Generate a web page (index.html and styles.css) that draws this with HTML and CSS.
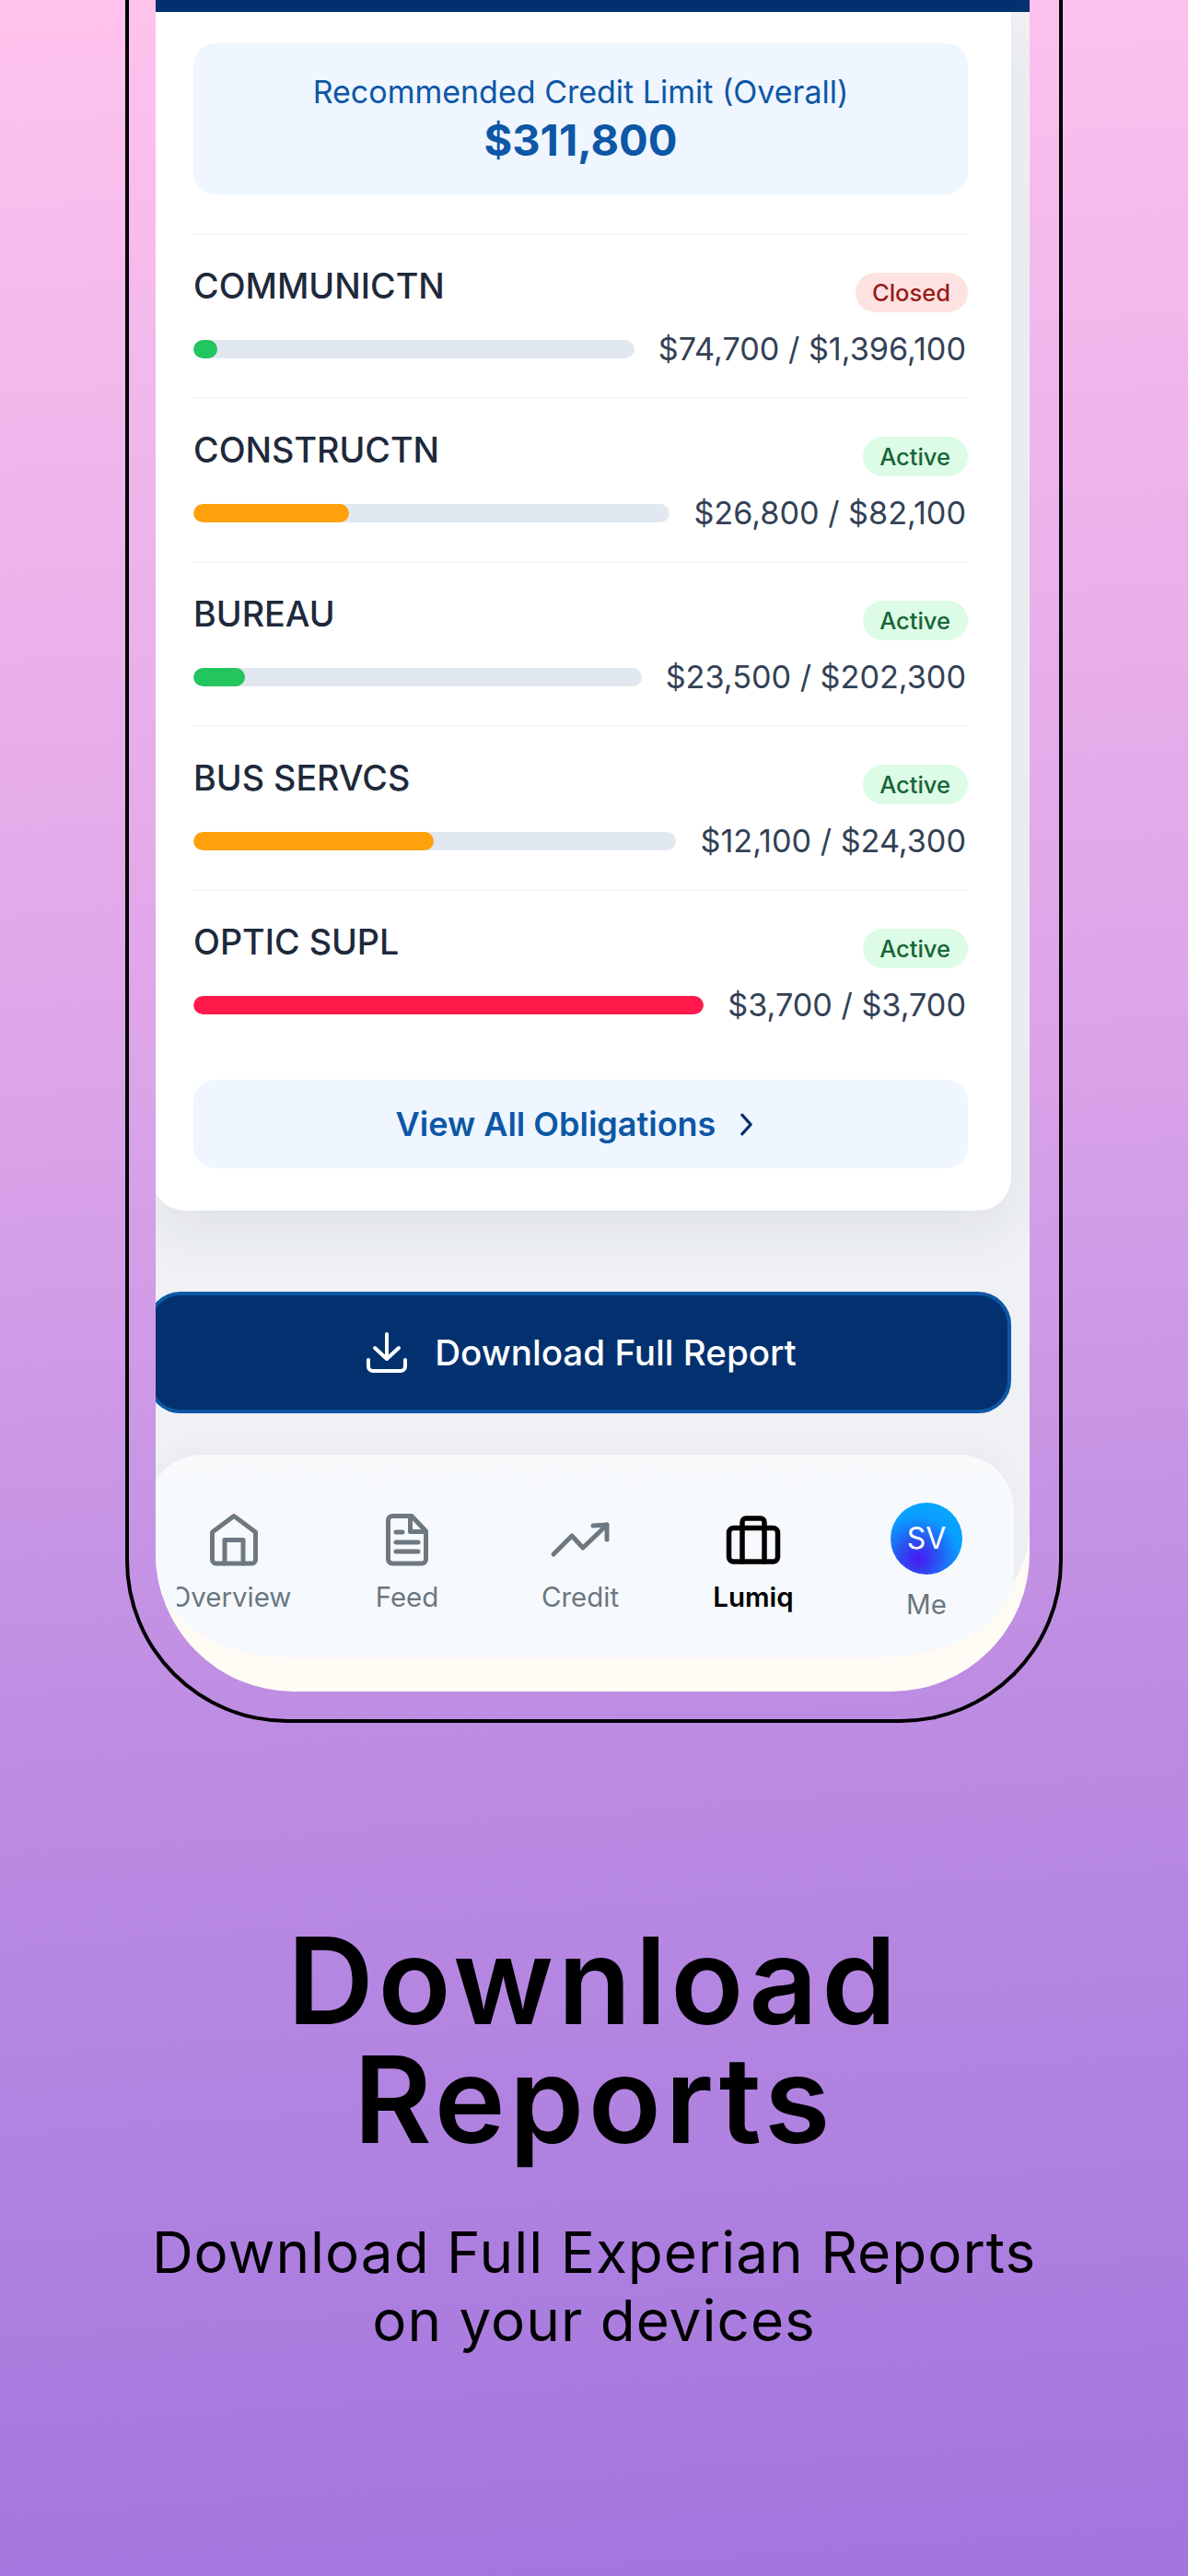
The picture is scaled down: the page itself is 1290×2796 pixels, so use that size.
FILE: index.html
```html
<!DOCTYPE html>
<html lang="en">
<head>
<meta charset="utf-8">
<title>Download Reports</title>
<link rel="stylesheet" href="styles.css">
</head>
<body>
<main class="poster">
  <section class="phone">
    <div class="screen">
      <div class="content">
        <div class="header-strip"></div>
        <div class="card">
          <div class="limit-box">
            <div class="limit-label">Recommended Credit Limit (Overall)</div>
            <div class="limit-value">$311,800</div>
          </div>
          <div class="row">
            <div class="row-top"><span class="row-name">COMMUNICTN</span><span class="pill pill-closed">Closed</span></div>
            <div class="row-bottom"><div class="track"><div class="fill fill-green" style="width:5.35%"></div></div><span class="amount">$74,700 / $1,396,100</span></div>
          </div>
          <div class="row">
            <div class="row-top"><span class="row-name">CONSTRUCTN</span><span class="pill pill-active">Active</span></div>
            <div class="row-bottom"><div class="track"><div class="fill fill-orange" style="width:32.6%"></div></div><span class="amount">$26,800 / $82,100</span></div>
          </div>
          <div class="row">
            <div class="row-top"><span class="row-name">BUREAU</span><span class="pill pill-active">Active</span></div>
            <div class="row-bottom"><div class="track"><div class="fill fill-green" style="width:11.6%"></div></div><span class="amount">$23,500 / $202,300</span></div>
          </div>
          <div class="row">
            <div class="row-top"><span class="row-name">BUS SERVCS</span><span class="pill pill-active">Active</span></div>
            <div class="row-bottom"><div class="track"><div class="fill fill-orange" style="width:49.8%"></div></div><span class="amount">$12,100 / $24,300</span></div>
          </div>
          <div class="row">
            <div class="row-top"><span class="row-name">OPTIC SUPL</span><span class="pill pill-active">Active</span></div>
            <div class="row-bottom"><div class="track"><div class="fill fill-red" style="width:100%"></div></div><span class="amount">$3,700 / $3,700</span></div>
          </div>
          <div class="view-all">
            <span>View All Obligations</span>
            <svg class="chevron" viewBox="0 0 16 26" fill="none" stroke="#03316f" stroke-width="3.4" stroke-linecap="round" stroke-linejoin="round"><path d="M3 2l10 11L3 24"/></svg>
          </div>
        </div>
        <div class="download">
          <svg class="download-icon" viewBox="0 0 44 44" fill="none" stroke="#fff" stroke-width="4" stroke-linecap="round" stroke-linejoin="round"><path d="M22 2v27M9 17l13 12 13-12"/><path d="M2 30v7a5 5 0 0 0 5 5h30a5 5 0 0 0 5-5v-7"/></svg>
          <span>Download Full Report</span>
        </div>
        <nav class="tabbar">
          <div class="tab">
            <svg class="tab-icon" viewBox="0 0 60 60" fill="none" stroke="#6e7880" stroke-width="5" stroke-linecap="round" stroke-linejoin="round"><path d="M30 4.500L53.500 22v30a4 4 0 0 1-4 4h-39a4 4 0 0 1-4-4V22z"/><path d="M20 56V30.500h20V56"/></svg>
            <div class="tab-label-clip tab-label-clip-end"><span class="tab-label">Overview</span></div>
          </div>
          <div class="tab">
            <svg class="tab-icon" viewBox="0 0 60 60" fill="none" stroke="#6e7880" stroke-width="5" stroke-linecap="round" stroke-linejoin="round"><path d="M35 4.500H14a4.500 4.500 0 0 0-4.500 4.500v42.500a4.500 4.500 0 0 0 4.500 4.500h32a4.500 4.500 0 0 0 4.500-4.500V21z"/><path d="M33.500 4.500V21.500H50"/><path d="M18 22h7M18 33h24M18 43h24"/></svg>
            <div class="tab-label-clip"><span class="tab-label">Feed</span></div>
          </div>
          <div class="tab">
            <svg class="tab-icon tab-icon-wide" viewBox="0 0 70 60" fill="none" stroke="#6e7880" stroke-width="5" stroke-linecap="round" stroke-linejoin="round"><path d="M6 46l20-20 12 13 26-25"/><path d="M49 15l15-1v16"/></svg>
            <div class="tab-label-clip"><span class="tab-label">Credit</span></div>
          </div>
          <div class="tab tab-active">
            <svg class="tab-icon" viewBox="0 0 60 60" fill="none" stroke="#000" stroke-width="5.500" stroke-linecap="round" stroke-linejoin="round"><rect x="3.500" y="17.500" width="53" height="36.500" rx="5"/><path d="M18 54V11a4 4 0 0 1 4-4h16a4 4 0 0 1 4 4v43"/></svg>
            <div class="tab-label-clip"><span class="tab-label">Lumiq</span></div>
          </div>
          <div class="tab tab-me">
            <div class="avatar">SV</div>
            <div class="tab-label-clip"><span class="tab-label">Me</span></div>
          </div>
        </nav>
      </div>
    </div>
  </section>
  <section class="caption">
    <h1 class="headline">Download<br>Reports</h1>
    <p class="subline">Download Full Experian Reports<br>on your devices</p>
  </section>
</main>
</body>
</html>
```
FILE: styles.css
```css
* { box-sizing: border-box; }
html, body { margin: 0; padding: 0; }
body { width: 1290px; height: 2796px; overflow: hidden; font-family: "Inter", "Liberation Sans", sans-serif; }

.poster {
  width: 1290px;
  height: 2796px;
  background: linear-gradient(176deg, #ffc3ed 0%, #dda5e9 40%, #bd8de3 66%, #a175dd 100%);
  overflow: hidden;
}

.phone {
  width: 1018px;
  height: 1870px;
  margin-left: 136px;
  padding: 0 32px 30px 29px;
  border: 4px solid #000;
  border-top: 0;
  border-radius: 0 0 176px 176px;
}

.screen {
  width: 949px;
  height: 1836px;
  background: #fffbf5;
  border-radius: 0 0 150px 150px;
  overflow: hidden;
}

.content {
  height: 1760px;
  background: #eff1f5;
  border-radius: 0 0 100px 100px;
  display: flex;
  flex-direction: column;
}

.header-strip { height: 13px; flex: none; background: #03316f; }

.card {
  width: 933px;
  height: 1301px;
  margin-left: -4px;
  flex: none;
  padding: 34px 47px 0 45px;
  background: #fff;
  border-radius: 0 0 36px 36px;
  box-shadow: 0 24px 60px rgba(30, 41, 59, .07);
}

.limit-box {
  height: 164px;
  padding-top: 1px;
  background: #eff6ff;
  border-radius: 24px;
  display: flex;
  flex-direction: column;
  align-items: center;
  justify-content: center;
  color: #0d57a6;
  margin-bottom: 42px;
}
.limit-label { font-size: 34px; line-height: 44px; }
.limit-value { font-size: 47px; font-weight: 700; line-height: 60px; }

.row {
  height: 178px;
  border-top: 2px solid #f1f5f9;
  padding-top: 41px;
}
.row-top { display: flex; justify-content: space-between; align-items: flex-start; height: 43px; }
.row-name { font-size: 37.700px; line-height: 28px; font-weight: 500; color: #1e293b; }
.pill {
  height: 43px;
  padding: 0 19px 0 18px;
  border-radius: 22px;
  font-size: 25.500px;
  font-weight: 550;
  line-height: 43px;
}
.pill-closed { background: #fee2e2; color: #991b1b; }
.pill-active { background: #dcfce7; color: #166534; }

.row-bottom { display: flex; align-items: center; gap: 26px; margin-top: 30px; height: 20px; }
.track { flex: 1; height: 20px; background: #e2e8f0; border-radius: 10px; overflow: hidden; }
.fill { height: 100%; border-radius: 10px; }
.fill-green { background: #22c55e; }
.fill-orange { background: #ffa10a; }
.fill-red { background: #ff1a4b; }
.amount { font-size: 34.200px; line-height: 40px; color: #334155; font-weight: 400; white-space: nowrap; padding-right: 2px; }

.view-all {
  height: 96px;
  margin-top: 29px;
  padding-right: 13px;
  border-radius: 24px;
  background: #eff6ff;
  color: #0d57a6;
  font-size: 36px;
  font-weight: 600;
  display: flex;
  align-items: center;
  justify-content: center;
  gap: 26px;
}
.chevron { width: 15px; height: 25px; }

.download {
  flex: none;
  width: 938px;
  height: 132px;
  margin: 88px 0 0 -9px;
  padding-left: 5px;
  border: 4px solid #0d57a6;
  border-radius: 36px;
  background: #03316f;
  color: #fff;
  font-size: 38.600px;
  font-weight: 500;
  display: flex;
  align-items: center;
  justify-content: center;
  gap: 30px;
}
.download-icon { width: 44px; height: 44px; }

.tabbar {
  flex: none;
  width: 941px;
  height: 220px;
  margin: 45px 0 0 -9px;
  background: linear-gradient(180deg, #f8fafc 0%, #f5f9fd 100%);
  border-radius: 60px 60px 150px 155px / 60px 60px 92px 120px;
  box-shadow: 0 -8px 30px rgba(30, 41, 59, .03);
  display: flex;
  padding-top: 62px;
}
.tab { width: 188px; display: flex; flex-direction: column; align-items: center; color: #6b7780; }
.tab-icon { width: 60px; height: 60px; flex: none; }
.tab-icon-wide { width: 70px; }
.tab-label-clip { width: 125px; margin-top: 13px; display: flex; justify-content: center; overflow: hidden; }
.tab-label-clip-end { justify-content: flex-end; }
.tab-label { font-size: 29.500px; line-height: 38px; flex: none; font-weight: 400; }
.tab-active { color: #000; }
.tab-active .tab-label { font-weight: 600; }
.tab-me { margin-top: -10px; }
.tab-me .tab-label-clip { margin-top: 13px; }
.avatar {
  width: 78px;
  height: 78px;
  border-radius: 50%;
  background: radial-gradient(circle at 38% 78%, #4a18f5 0%, #2a50f0 26%, #0a9cff 58%, #00b2ff 100%);
  color: #fff;
  font-size: 32px;
  line-height: 78px;
  text-align: center;
}

.caption { padding-top: 215px; text-align: center; width: 1290px; }
.headline {
  margin: 0;
  font-size: 130px;
  line-height: 129px;
  font-weight: 600;
  letter-spacing: 4.500px;
  color: #000;
}
.subline {
  margin: 65px 0 0;
  font-size: 62px;
  line-height: 74px;
  letter-spacing: 1px;
  color: #000;
}
```
